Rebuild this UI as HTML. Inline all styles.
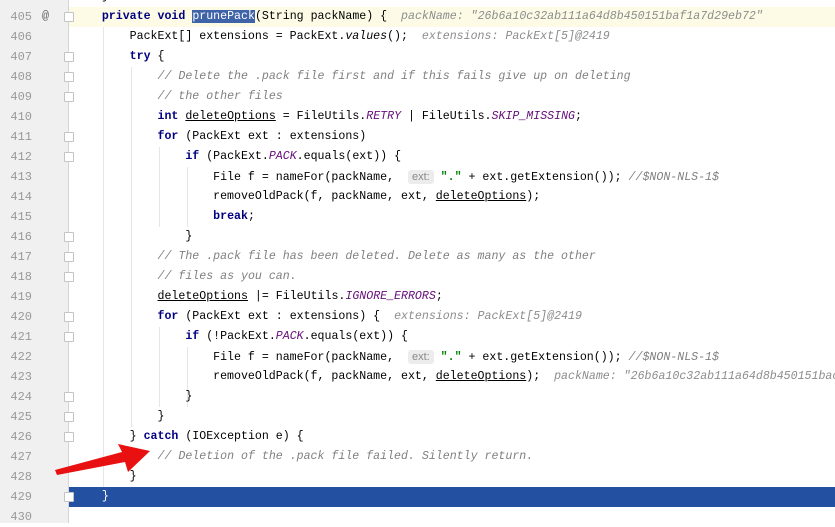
<!DOCTYPE html><html><head><style>
body{margin:0;width:835px;height:523px;overflow:hidden;background:#fff;position:relative;font-family:"Liberation Mono",monospace;font-size:11.6px}
.g{position:absolute;left:0;top:0;width:68px;height:523px;background:#f0f0f0;border-right:1px solid #d5d5d5}
.r{position:absolute;left:0;width:835px;height:20px;line-height:20px;white-space:pre}
.n{position:absolute;left:0;width:32px;text-align:right;color:#999;font-size:12px}
.c{position:absolute;left:74px;color:#000}
.k{color:#000080;font-weight:bold}
.cm{color:#808080;font-style:italic}
.s{color:#008000;font-weight:bold}
.st{font-style:italic;color:#660e7a}
.u{text-decoration:underline}
.h{color:#8c8c8c;font-style:italic}
.p{background:#ececec;color:#888;font-family:"Liberation Sans",sans-serif;font-size:11px;border-radius:3px;padding:1px 4px}
.f{position:absolute;left:64px;width:8px;height:8px;border:1px solid #c4c4c4;background:#fff;border-radius:1px}
.v{position:absolute;width:1px;background:#e6e6e6}
</style></head><body>
<div class="r" style="top:7px;background:#fdfbe6"></div>
<div class="r" style="top:487px;left:69px;width:766px;background:#2350a0"></div>
<div class="g"></div>
<div class="v" style="left:103px;top:27px;height:460px"></div>
<div class="v" style="left:131px;top:67px;height:360px"></div>
<div class="v" style="left:159px;top:147px;height:80px"></div>
<div class="v" style="left:159px;top:327px;height:80px"></div>
<div class="v" style="left:187px;top:167px;height:60px"></div>
<div class="v" style="left:187px;top:347px;height:60px"></div>
<div class="r" style="top:-13px"><span class="n">404</span><span class="c">    }</span></div>
<div class="r" style="top:7px"><span class="n">405</span><span style="position:absolute;left:42px;color:#666">@</span><span class="c">    <span class="k">private void</span> <span style="background:#3f63a8;color:#fff">prunePack</span>(String packName) {  <span class="h">packName: "26b6a10c32ab111a64d8b450151baf1a7d29eb72"</span></span></div>
<div class="r" style="top:27px"><span class="n">406</span><span class="c">        PackExt[] extensions = PackExt.<i>values</i>();  <span class="h">extensions: PackExt[5]@2419</span></span></div>
<div class="r" style="top:47px"><span class="n">407</span><span class="c">        <span class="k">try</span> {</span></div>
<div class="r" style="top:67px"><span class="n">408</span><span class="c">            <span class="cm">// Delete the .pack file first and if this fails give up on deleting</span></span></div>
<div class="r" style="top:87px"><span class="n">409</span><span class="c">            <span class="cm">// the other files</span></span></div>
<div class="r" style="top:107px"><span class="n">410</span><span class="c">            <span class="k">int</span> <span class="u">deleteOptions</span> = FileUtils.<span class="st">RETRY</span> | FileUtils.<span class="st">SKIP_MISSING</span>;</span></div>
<div class="r" style="top:127px"><span class="n">411</span><span class="c">            <span class="k">for</span> (PackExt ext : extensions)</span></div>
<div class="r" style="top:147px"><span class="n">412</span><span class="c">                <span class="k">if</span> (PackExt.<span class="st">PACK</span>.equals(ext)) {</span></div>
<div class="r" style="top:167px"><span class="n">413</span><span class="c">                    File f = nameFor(packName,  <span class="p">ext:</span> <span class="s">"."</span> + ext.getExtension()); <span class="cm">//$NON-NLS-1$</span></span></div>
<div class="r" style="top:187px"><span class="n">414</span><span class="c">                    removeOldPack(f, packName, ext, <span class="u">deleteOptions</span>);</span></div>
<div class="r" style="top:207px"><span class="n">415</span><span class="c">                    <span class="k">break</span>;</span></div>
<div class="r" style="top:227px"><span class="n">416</span><span class="c">                }</span></div>
<div class="r" style="top:247px"><span class="n">417</span><span class="c">            <span class="cm">// The .pack file has been deleted. Delete as many as the other</span></span></div>
<div class="r" style="top:267px"><span class="n">418</span><span class="c">            <span class="cm">// files as you can.</span></span></div>
<div class="r" style="top:287px"><span class="n">419</span><span class="c">            <span class="u">deleteOptions</span> |= FileUtils.<span class="st">IGNORE_ERRORS</span>;</span></div>
<div class="r" style="top:307px"><span class="n">420</span><span class="c">            <span class="k">for</span> (PackExt ext : extensions) {  <span class="h">extensions: PackExt[5]@2419</span></span></div>
<div class="r" style="top:327px"><span class="n">421</span><span class="c">                <span class="k">if</span> (!PackExt.<span class="st">PACK</span>.equals(ext)) {</span></div>
<div class="r" style="top:347px"><span class="n">422</span><span class="c">                    File f = nameFor(packName,  <span class="p">ext:</span> <span class="s">"."</span> + ext.getExtension()); <span class="cm">//$NON-NLS-1$</span></span></div>
<div class="r" style="top:367px"><span class="n">423</span><span class="c">                    removeOldPack(f, packName, ext, <span class="u">deleteOptions</span>);  <span class="h">packName: "26b6a10c32ab111a64d8b450151bac</span></span></div>
<div class="r" style="top:387px"><span class="n">424</span><span class="c">                }</span></div>
<div class="r" style="top:407px"><span class="n">425</span><span class="c">            }</span></div>
<div class="r" style="top:427px"><span class="n">426</span><span class="c">        } <span class="k">catch</span> (IOException e) {</span></div>
<div class="r" style="top:447px"><span class="n">427</span><span class="c">            <span class="cm">// Deletion of the .pack file failed. Silently return.</span></span></div>
<div class="r" style="top:467px"><span class="n">428</span><span class="c">        }</span></div>
<div class="r" style="top:487px"><span class="n">429</span><span class="c" style="color:#fff">    }</span></div>
<div class="r" style="top:507px"><span class="n">430</span></div>
<div class="f" style="top:12px"></div><div class="f" style="top:52px"></div><div class="f" style="top:72px"></div><div class="f" style="top:92px"></div>
<div class="f" style="top:132px"></div><div class="f" style="top:152px"></div><div class="f" style="top:232px"></div>
<div class="f" style="top:252px"></div><div class="f" style="top:272px"></div><div class="f" style="top:312px"></div><div class="f" style="top:332px"></div>
<div class="f" style="top:392px"></div><div class="f" style="top:412px"></div><div class="f" style="top:432px"></div><div class="f" style="top:492px"></div>
<svg style="position:absolute;left:0;top:0" width="835" height="523"><polygon points="55,470 122,452 118,444 150,451 128,472 125,462 57,475" fill="#e81010"/></svg>
</body></html>
